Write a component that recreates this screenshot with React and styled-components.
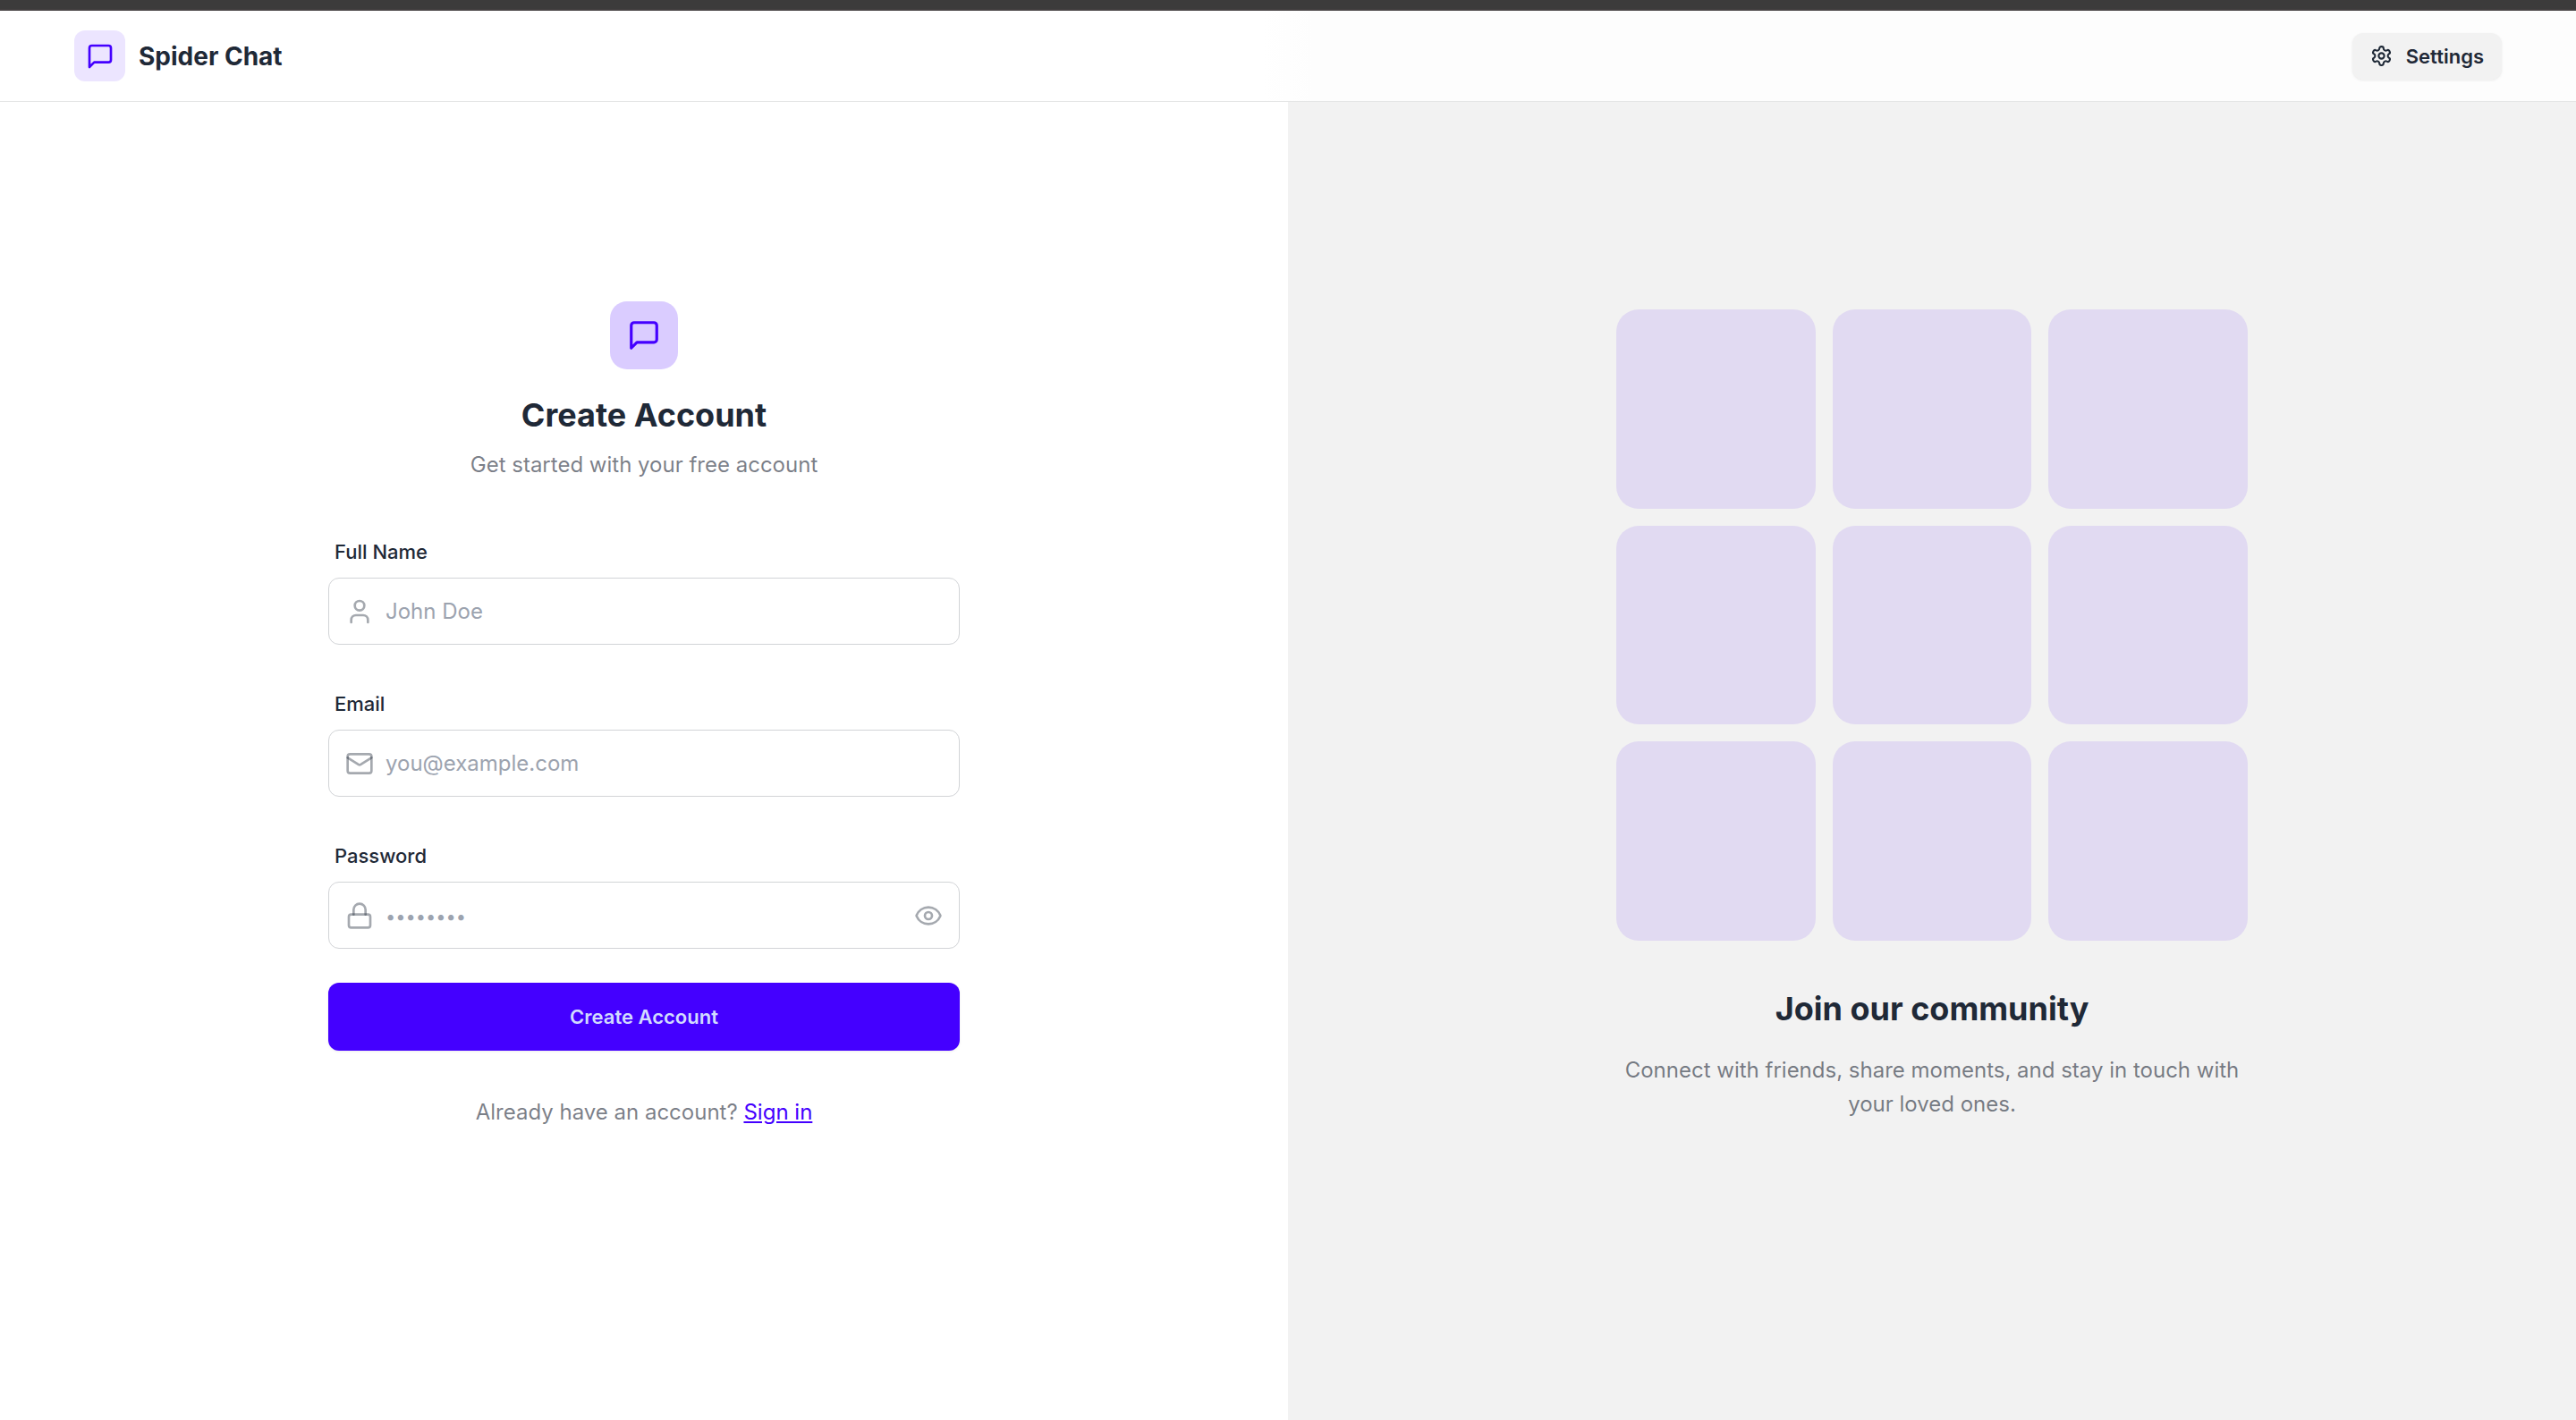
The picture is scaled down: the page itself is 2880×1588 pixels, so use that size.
import React, { useState } from "react";
import styled, { createGlobalStyle } from "styled-components";
import { Eye, EyeOff, Lock, Mail, User } from "lucide-react";

const ink = "#1f2937";
const muted = "rgba(31, 41, 55, 0.6)";
const faint = "rgba(31, 41, 55, 0.4)";
const primary = "#4400ff";

const GlobalStyle = createGlobalStyle`
  *, *::before, *::after { box-sizing: border-box; }
  body {
    margin: 0;
    color: ${ink};
    background: #ffffff;
    font-family: Inter, "Liberation Sans", sans-serif;
    font-size: 24px;
    line-height: 38px;
  }
  h1, h2, p { margin: 0; }
  button, input { font: inherit; color: inherit; }
`;

const Page = styled.div`
  display: flex;
  flex-direction: column;
  min-height: 100vh;
`;

const TopStrip = styled.div`
  height: 12px;
  background: #3c3b3b;
  border-bottom: 2px solid #444041;
`;

const Header = styled.header`
  display: flex;
  align-items: center;
  justify-content: space-between;
  height: 102px;
  padding: 0 83px;
  border-bottom: 1px solid #e5e6e6;
  background: linear-gradient(90deg, #ffffff 49%, #fdfdfd 51%);
`;

const Brand = styled.a`
  display: flex;
  align-items: center;
  gap: 15px;
  color: inherit;
  text-decoration: none;
`;

const BrandName = styled.span`
  font-size: 28px;
  font-weight: 700;
`;

const IconTile = styled.span`
  display: flex;
  align-items: center;
  justify-content: center;
  width: ${(p) => p.$size}px;
  height: ${(p) => p.$size}px;
  border-radius: ${(p) => p.$radius}px;
  background: ${(p) => p.$tint};
  color: ${primary};
`;

const SettingsButton = styled.button`
  display: flex;
  align-items: center;
  gap: 15px;
  height: 52px;
  padding: 0 20px;
  border: 0;
  border-radius: 12px;
  background: #f2f2f2;
  box-shadow: 0 1px 3px rgba(0, 0, 0, 0.08);
  font-size: 22px;
  font-weight: 600;
  cursor: pointer;
`;

const Main = styled.main`
  flex: 1;
  display: grid;
  grid-template-columns: 1fr 1fr;
`;

const Panel = styled.section`
  display: flex;
  flex-direction: column;
  align-items: center;
  justify-content: center;
  padding: 0 48px 102px;
  background: ${(p) => p.$background};
`;

const Column = styled.div`
  width: 100%;
  max-width: 706px;
`;

const Intro = styled.div`
  display: flex;
  flex-direction: column;
  align-items: center;
  margin-bottom: 50px;
`;

const Title = styled.h1`
  margin: 26px 0 12px;
  font-size: 36px;
  line-height: 50px;
  font-weight: 700;
`;

const Muted = styled.p`
  color: ${muted};
  text-align: center;
`;

const Form = styled.form`
  display: flex;
  flex-direction: column;
  gap: 38px;
`;

const Field = styled.div`
  display: flex;
  flex-direction: column;
`;

const Label = styled.label`
  padding: 12px 7px 13px;
  font-size: 22px;
  line-height: 32px;
  font-weight: 500;
`;

const InputBox = styled.div`
  display: flex;
  align-items: center;
  gap: 13px;
  height: 75px;
  padding: 0 18px;
  border: 1px solid #d2d4d7;
  border-radius: 12px;
  color: ${faint};
`;

const Input = styled.input`
  flex: 1;
  min-width: 0;
  padding: 0;
  border: 0;
  outline: 0;
  background: transparent;
  color: ${ink};
  &::placeholder { color: #9ca3af; opacity: 1; }
  &[type="password"]::placeholder { font-size: 20px; }
`;

const IconButton = styled.button`
  display: flex;
  padding: 0;
  border: 0;
  background: none;
  color: ${faint};
  cursor: pointer;
`;

const SubmitButton = styled.button`
  height: 76px;
  border: 0;
  border-radius: 12px;
  background: ${primary};
  box-shadow: 0 1px 3px rgba(0, 0, 0, 0.08);
  color: #d1dbff;
  font-size: 22px;
  font-weight: 600;
  cursor: pointer;
`;

const SignInLine = styled(Muted)`
  margin-top: 50px;
`;

const TextLink = styled.a`
  color: ${primary};
  text-decoration: underline;
`;

const TileGrid = styled.div`
  display: grid;
  grid-template-columns: repeat(3, 1fr);
  gap: 19px;
  margin-bottom: 51px;
`;

const Tile = styled.div`
  aspect-ratio: 1;
  border-radius: 25px;
  background: #e1daf2;
`;

const Subtitle = styled.h2`
  margin-bottom: 25px;
  font-size: 36px;
  line-height: 50px;
  font-weight: 700;
  text-align: center;
`;

function ChatIcon({ size }) {
  return (
    <svg width={size} height={size} viewBox="0 0 24 24" fill="none" stroke="currentColor" strokeWidth="2" strokeLinecap="round" strokeLinejoin="round" aria-hidden="true">
      <path d="M21 15a2 2 0 0 1-2 2H7l-4 4V5a2 2 0 0 1 2-2h14a2 2 0 0 1 2 2z" />
    </svg>
  );
}

function GearIcon({ size }) {
  return (
    <svg width={size} height={size} viewBox="0 0 24 24" fill="none" stroke="currentColor" strokeWidth="2" strokeLinecap="round" strokeLinejoin="round" aria-hidden="true">
      <path d="M12.22 2h-.44a2 2 0 0 0-2 2v.18a2 2 0 0 1-1 1.73l-.43.25a2 2 0 0 1-2 0l-.15-.08a2 2 0 0 0-2.73.73l-.22.38a2 2 0 0 0 .73 2.73l.15.1a2 2 0 0 1 1 1.72v.51a2 2 0 0 1-1 1.74l-.15.09a2 2 0 0 0-.73 2.73l.22.38a2 2 0 0 0 2.73.73l.15-.08a2 2 0 0 1 2 0l.43.25a2 2 0 0 1 1 1.73V20a2 2 0 0 0 2 2h.44a2 2 0 0 0 2-2v-.18a2 2 0 0 1 1-1.73l.43-.25a2 2 0 0 1 2 0l.15.08a2 2 0 0 0 2.73-.73l.22-.39a2 2 0 0 0-.73-2.73l-.15-.08a2 2 0 0 1-1-1.74v-.5a2 2 0 0 1 1-1.74l.15-.09a2 2 0 0 0 .73-2.73l-.22-.38a2 2 0 0 0-2.73-.73l-.15.08a2 2 0 0 1-2 0l-.43-.25a2 2 0 0 1-1-1.73V4a2 2 0 0 0-2-2z" />
      <circle cx="12" cy="12" r="3" />
    </svg>
  );
}

function TextField({ id, label, icon: Icon, type, placeholder, children }) {
  return (
    <Field>
      <Label htmlFor={id}>{label}</Label>
      <InputBox>
        <Icon size={32} aria-hidden="true" />
        <Input id={id} type={type} placeholder={placeholder} />
        {children}
      </InputBox>
    </Field>
  );
}

export default function App() {
  const [visible, setVisible] = useState(false);
  const ToggleIcon = visible ? EyeOff : Eye;

  return (
    <Page>
      <GlobalStyle />
      <TopStrip />
      <Header>
        <Brand href="#">
          <IconTile $size={57} $radius={12} $tint="#ece5ff">
            <ChatIcon size={32} />
          </IconTile>
          <BrandName>Spider Chat</BrandName>
        </Brand>
        <SettingsButton type="button">
          <GearIcon size={25} />
          Settings
        </SettingsButton>
      </Header>
      <Main>
        <Panel $background="#ffffff">
          <Column>
            <Intro>
              <IconTile $size={76} $radius={19} $tint="#daccff">
                <ChatIcon size={38} />
              </IconTile>
              <Title>Create Account</Title>
              <Muted>Get started with your free account</Muted>
            </Intro>
            <Form onSubmit={(e) => e.preventDefault()}>
              <TextField id="name" label="Full Name" icon={User} type="text" placeholder="John Doe" />
              <TextField id="email" label="Email" icon={Mail} type="email" placeholder="you@example.com" />
              <TextField id="password" label="Password" icon={Lock} type={visible ? "text" : "password"} placeholder="••••••••">
                <IconButton type="button" aria-label="Toggle password visibility" onClick={() => setVisible(!visible)}>
                  <ToggleIcon size={32} />
                </IconButton>
              </TextField>
              <SubmitButton type="submit">Create Account</SubmitButton>
            </Form>
            <SignInLine>
              Already have an account? <TextLink href="#">Sign in</TextLink>
            </SignInLine>
          </Column>
        </Panel>
        <Panel $background="#f2f2f2">
          <Column>
            <TileGrid>
              {Array.from({ length: 9 }, (_, i) => (
                <Tile key={i} />
              ))}
            </TileGrid>
            <Subtitle>Join our community</Subtitle>
            <Muted>Connect with friends, share moments, and stay in touch with your loved ones.</Muted>
          </Column>
        </Panel>
      </Main>
    </Page>
  );
}
